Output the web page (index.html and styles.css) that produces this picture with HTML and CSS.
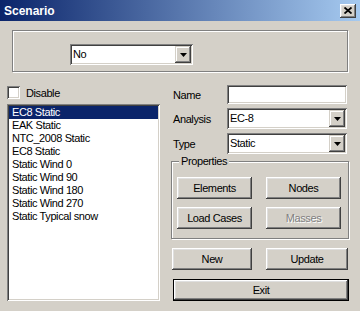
FILE: index.html
```html
<!DOCTYPE html>
<html lang="en">
<head>
  <meta charset="UTF-8">
  <meta name="viewport" content="width=device-width, initial-scale=1.0">
  <link rel="stylesheet" href="styles.css">
  <title>Scenario</title>
</head>
<body>
  <div class="window">
    <div class="titlebar">
      <span class="title">Scenario</span>
      <button class="close">
        <svg width="8" height="7" viewBox="0 0 8 7">
          <path d="M0.5 0.5 L7.5 6.5 M7.5 0.5 L0.5 6.5" stroke="#000" stroke-width="1.8" />
        </svg>
      </button>
    </div>
    <div class="content">
      <div class="group top-group">
        <div class="combo scenario-combo">
          <span class="combo-value">No</span>
          <span class="combo-btn"><svg width="7" height="4" viewBox="0 0 7 4"><path d="M0 0 H7 L3.5 4 Z" fill="#000" /></svg></span>
        </div>
      </div>
      <div class="main">
        <div class="left">
          <label class="check"><span class="check-box"></span>Disable</label>
          <ul class="list">
            <li class="selected">EC8 Static</li>
            <li>EAK Static</li>
            <li>NTC_2008 Static</li>
            <li>EC8 Static</li>
            <li>Static Wind 0</li>
            <li>Static Wind 90</li>
            <li>Static Wind 180</li>
            <li>Static Wind 270</li>
            <li>Static Typical snow</li>
          </ul>
        </div>
        <div class="right">
          <div class="field">
            <span class="field-label">Name</span>
            <div class="edit"></div>
          </div>
          <div class="field">
            <span class="field-label">Analysis</span>
            <div class="combo field-combo">
              <span class="combo-value">EC-8</span>
              <span class="combo-btn"><svg width="7" height="4" viewBox="0 0 7 4"><path d="M0 0 H7 L3.5 4 Z" fill="#000" /></svg></span>
            </div>
          </div>
          <div class="field">
            <span class="field-label">Type</span>
            <div class="combo field-combo">
              <span class="combo-value">Static</span>
              <span class="combo-btn"><svg width="7" height="4" viewBox="0 0 7 4"><path d="M0 0 H7 L3.5 4 Z" fill="#000" /></svg></span>
            </div>
          </div>
          <div class="group props">
            <span class="legend">Properties</span>
            <div class="props-grid">
              <button class="btn">Elements</button>
              <button class="btn">Nodes</button>
              <button class="btn">Load Cases</button>
              <button class="btn" disabled>Masses</button>
            </div>
          </div>
          <div class="btn-row">
            <button class="btn new-btn">New</button>
            <button class="btn update-btn">Update</button>
          </div>
          <button class="btn default-btn">Exit</button>
        </div>
      </div>
    </div>
  </div>
</body>
</html>
```

FILE: styles.css
```css
:root {
  --face: #d4d0c8;
  --shadow: #808080;
  --dark: #404040;
  --hilite: #ffffff;
  --select: #0a246a;
}

body {
  margin: 0px;
  background-color: var(--face);
  font-family: "Liberation Sans", Arial, sans-serif;
  font-size: 11px;
  letter-spacing: -0.4px;
  color: #000;
}

.window {
  width: 360px;
  height: 311px;
  display: flex;
  flex-direction: column;
  overflow: hidden;
  background-color: var(--face);
}

.titlebar {
  height: 21px;
  flex-shrink: 0;
  display: flex;
  align-items: center;
  justify-content: space-between;
  padding: 0px 4px;
  background: linear-gradient(to right, #0a246a, #a6caf0);
}

.title {
  color: #fff;
  font-weight: bold;
  font-size: 12px;
  letter-spacing: 0px;
}

.close {
  width: 16px;
  height: 14px;
  padding: 0px;
  border: none;
  display: flex;
  align-items: center;
  justify-content: center;
  background-color: var(--face);
  box-shadow: inset -1px -1px var(--dark), inset 1px 1px var(--hilite), inset -2px -2px var(--shadow), inset 2px 2px #dfdfdf;
}

.content {
  padding: 0px 11px 0px 7px;
}

/* etched frame */
.group {
  box-sizing: border-box;
  border: 1px solid var(--shadow);
  box-shadow: inset 1px 1px var(--hilite), 1px 1px var(--hilite);
}

.top-group {
  margin: 9px 1px 0px 5px;
  height: 42px;
  padding: 13px 0px 0px 57px;
}

.combo {
  box-sizing: border-box;
  display: flex;
  height: 21px;
  padding: 2px;
  background-color: #fff;
  box-shadow: inset 1px 1px var(--shadow), inset -1px -1px var(--hilite), inset 2px 2px var(--dark), inset -2px -2px var(--face);
}

.scenario-combo {
  width: 123px;
}

.combo-value {
  flex: 1;
  padding-left: 1px;
  line-height: 17px;
}

.combo-btn {
  width: 16px;
  height: 17px;
  display: flex;
  align-items: center;
  justify-content: center;
  background-color: var(--face);
  box-shadow: inset -1px -1px var(--dark), inset 1px 1px var(--face), inset -2px -2px var(--shadow), inset 2px 2px var(--hilite);
}

.main {
  display: flex;
  gap: 12px;
  margin-top: 13px;
}

.left {
  width: 153px;
  display: flex;
  flex-direction: column;
}

.check {
  display: flex;
  align-items: center;
  gap: 6px;
  height: 13px;
  margin-top: 1px;
}

.check-box {
  box-sizing: border-box;
  width: 13px;
  height: 13px;
  background-color: #fff;
  box-shadow: inset 1px 1px var(--shadow), inset -1px -1px var(--hilite), inset 2px 2px var(--dark), inset -2px -2px var(--face);
}

.list {
  box-sizing: border-box;
  list-style: none;
  margin: 5px 0px 0px;
  height: 197px;
  padding: 2px;
  background-color: #fff;
  box-shadow: inset 1px 1px var(--shadow), inset -1px -1px var(--hilite), inset 2px 2px var(--dark), inset -2px -2px var(--face);
}

.list li {
  height: 13px;
  line-height: 13px;
  padding-left: 3px;
  white-space: nowrap;
}

.list li.selected {
  background-color: var(--select);
  color: #fff;
}

.right {
  width: 177px;
  display: flex;
  flex-direction: column;
}

.field {
  display: flex;
  align-items: center;
  margin-bottom: 4px;
}

.field-label {
  width: 55px;
  padding-left: 1px;
  box-sizing: border-box;
}

.edit {
  box-sizing: border-box;
  width: 120px;
  height: 19px;
  background-color: #fff;
  box-shadow: inset 1px 1px var(--shadow), inset -1px -1px var(--hilite), inset 2px 2px var(--dark), inset -2px -2px var(--face);
}

.field-combo {
  width: 120px;
}

.props {
  position: relative;
  margin: 3px 0px 0px -1px;
  width: 178px;
  height: 78px;
  padding: 15px 7px 9px 5px;
}

.props > .legend {
  position: absolute;
  top: -7px;
  left: 7px;
  padding: 0px 2px;
  background-color: var(--face);
  line-height: 13px;
}

.props-grid {
  display: grid;
  grid-template-columns: 75px 75px;
  column-gap: 14px;
  row-gap: 8px;
}

.btn {
  box-sizing: border-box;
  height: 22px;
  padding: 0px;
  border: none;
  font: inherit;
  letter-spacing: inherit;
  color: #000;
  background-color: var(--face);
  box-shadow: inset -1px -1px var(--dark), inset 1px 1px var(--hilite), inset -2px -2px var(--shadow), inset 2px 2px #dfdfdf;
}

.btn:disabled {
  color: var(--shadow);
  text-shadow: 1px 1px var(--hilite);
}

.btn-row {
  display: flex;
  gap: 14px;
  margin-top: 9px;
}

.new-btn {
  width: 80px;
}

.update-btn {
  width: 82px;
}

.default-btn {
  margin: 9px 0px 0px 1px;
  width: 176px;
  border: 1px solid #000;
}
```
